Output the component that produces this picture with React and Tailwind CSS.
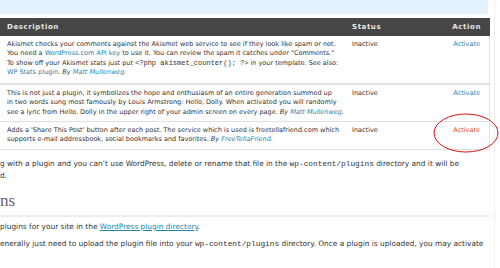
export default function App() {
  const rowText = "font-['DejaVu_Sans',sans-serif] text-[6.5px] leading-[9.3px] text-[#333]"
  const link = 'text-[#2583ad]'

  return (
    <div className="w-[500px] h-[268px] overflow-hidden bg-white relative">
      <div className="w-[495px] h-full border-r border-[#f0f0e8]">
        {/* notice strip */}
        <div className="w-[488px] h-[14px] bg-[#e4f2fd]" />

        {/* plugin table */}
        <div className="mt-[4px] w-[490px]">
          <div className="grid grid-cols-[345px_100px_1fr] h-[18px] items-center bg-[#464646] font-['DejaVu_Sans',sans-serif] text-[7px] font-bold tracking-[0.6px] text-[#e8e8e8]">
            <div className="pl-[7px]">Description</div>
            <div className="pl-[7px]">Status</div>
            <div className="text-right pr-[9px]">Action</div>
          </div>

          <div className={`grid grid-cols-[345px_100px_1fr] pt-[4px] pb-[6px] border-b-2 border-r border-[#e4e4e4] ${rowText}`}>
            <div className="pl-[7px] whitespace-nowrap">
              Akismet checks your comments against the Akismet web service to see if they look like spam or not.
              <br />
              You need a <span className={link}>WordPress.com API key</span> to use it. You can review the spam it catches under "Comments."
              <br />
              To show off your Akismet stats just put <code className="font-['Liberation_Mono',monospace] text-[7px]">&lt;?php akismet_counter(); ?&gt;</code> in your template. See also:
              <br />
              <span className={link}>WP Stats plugin</span>. <i>By <span className={link}>Matt Mullenweg</span>.</i>
            </div>
            <div className="pl-[7px]">Inactive</div>
            <div className="text-right pr-[9px] text-[#2583ad]">Activate</div>
          </div>

          <div className={`grid grid-cols-[345px_100px_1fr] pt-[4px] pb-[4px] border-b border-r border-[#e0e0e0] ${rowText}`}>
            <div className="pl-[7px] whitespace-nowrap">
              This is not just a plugin, it symbolizes the hope and enthusiasm of an entire generation summed up
              <br />
              in two words sung most famously by Louis Armstrong: Hello, Dolly. When activated you will randomly
              <br />
              see a lyric from Hello, Dolly in the upper right of your admin screen on every page. <i>By <span className={link}>Matt Mullenweg</span>.</i>
            </div>
            <div className="pl-[7px]">Inactive</div>
            <div className="text-right pr-[9px] text-[#2583ad]">Activate</div>
          </div>

          <div className={`grid grid-cols-[345px_100px_1fr] pt-[4px] pb-[4px] border-b border-r border-[#e0e0e0] ${rowText}`}>
            <div className="pl-[7px] whitespace-nowrap">
              Adds a 'Share This Post' button after each post. The service which is used is freetellafriend.com which
              <br />
              supports e-mail addressbook, social bookmarks and favorites. <i>By <span className={link}>FreeTellaFriend</span>.</i>
            </div>
            <div className="pl-[7px]">Inactive</div>
            <div className="relative text-right pr-[9px] text-[#d54e21]">
              Activate
              <svg className="absolute left-[-12px] top-[-13px]" width="66" height="40" viewBox="0 0 66 40">
                <ellipse cx="33" cy="20" rx="32" ry="19" fill="none" stroke="#e01010" strokeWidth="1" />
              </svg>
            </div>
          </div>
        </div>

        {/* help text */}
        <div className="mt-[8px] font-['DejaVu_Sans',sans-serif] text-[7.4px] leading-[12.5px] text-[#333]">
          <p className="whitespace-nowrap">
            g with a plugin and you can’t use WordPress, delete or rename that file in the <code className="font-['Liberation_Mono',monospace] text-[7.8px]">wp-content/plugins</code> directory and it will be
          </p>
          <p>d.</p>
        </div>

        <h2 className="mt-[8px] w-[490px] pb-[4px] border-b-2 border-[#ececec] font-['Liberation_Serif',serif] text-[17px] leading-[20px] text-[#666]">
          ns
        </h2>

        <div className="font-['DejaVu_Sans',sans-serif] text-[7.4px] leading-[12.5px] text-[#333]">
          <p className="mt-[4px] whitespace-nowrap">
            plugins for your site in the <span className="text-[#2583ad] underline">WordPress plugin directory</span>.
          </p>
          <p className="mt-[5px] whitespace-nowrap">
            enerally just need to upload the plugin file into your <code className="font-['Liberation_Mono',monospace] text-[7.8px]">wp-content/plugins</code> directory. Once a plugin is uploaded, you may activate
          </p>
        </div>
      </div>
    </div>
  )
}
